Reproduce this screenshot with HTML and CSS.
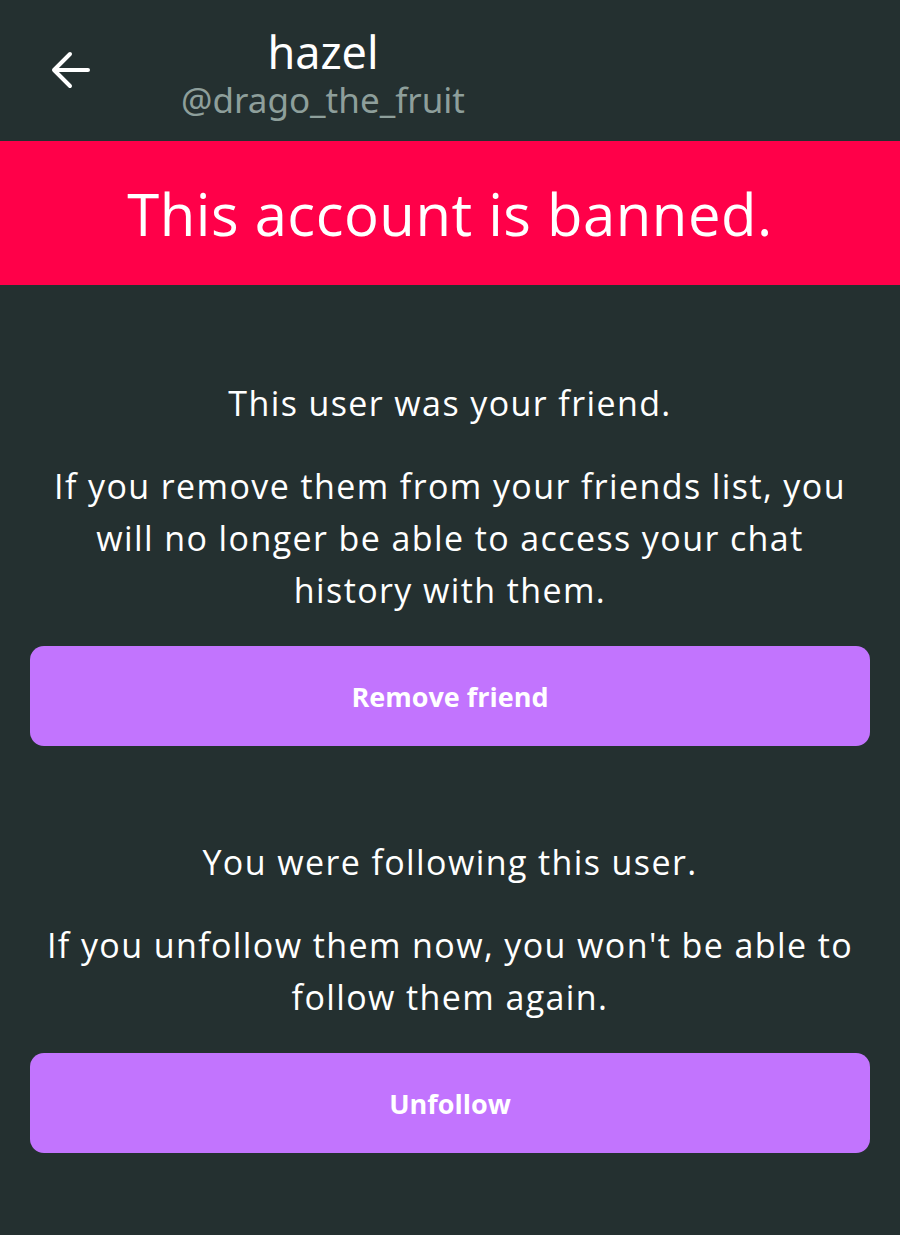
FILE: index.html
```html
<!DOCTYPE html>
<html lang="en">
<head>
    <meta charset="UTF-8">
    <meta name="viewport" content="width=device-width, initial-scale=1.0">
    <title>hazel</title>
    <link rel="stylesheet" href="styles.css">
</head>
<body>

<div class="header">
    <button class="back" aria-label="Back">
        <svg width="40" height="40" viewBox="0 0 40 40">
            <path d="M38 20H4M20 4L4 20l16 16" fill="none" stroke="#fff" stroke-width="4" stroke-linecap="round" stroke-linejoin="round"/>
        </svg>
    </button>
    <div class="title">
        <div class="name">hazel</div>
        <div class="handle">@drago_the_fruit</div>
    </div>
</div>

<div class="banned">This account is banned.</div>

<div class="content">
    <div class="section">
        <p class="lead">This user was your friend.</p>
        <p class="note">If you remove them from your friends list, you will no longer be able to access your chat history with them.</p>
        <button class="button">Remove friend</button>
    </div>

    <div class="section">
        <p class="lead">You were following this user.</p>
        <p class="note">If you unfollow them now, you won't be able to follow them again.</p>
        <button class="button">Unfollow</button>
    </div>
</div>

</body>
</html>
```

FILE: styles.css
```css
body {
    margin: 0;
    background-color: #243030;
    color: #fff;
    font-family: "Open Sans", "Noto Sans", sans-serif;
    height: 1235px;
}

.header {
    display: flex;
    align-items: center;
    height: 141px;
    padding-left: 48px;
    box-sizing: border-box;
}

.back {
    background: none;
    border: none;
    padding: 0;
    width: 44px;
    height: 44px;
    display: flex;
    align-items: center;
    justify-content: center;
    margin-top: -2px;
}

.title {
    display: flex;
    flex-direction: column;
    align-items: center;
    margin-left: 89px;
    margin-top: 6px;
}

.name {
    font-family: "Noto Sans", sans-serif;
    font-weight: 400;
    font-size: 45px;
    line-height: 52px;
}

.handle {
    font-family: "Noto Sans", sans-serif;
    font-size: 35px;
    line-height: 44px;
    color: #8e9f9b;
}

.banned {
    background-color: #ff0049;
    height: 144px;
    display: flex;
    align-items: center;
    justify-content: center;
    font-size: 58px;
    letter-spacing: 0.5px;
}

.content {
    padding: 92px 30px 0;
}

.section {
    text-align: center;
    margin-bottom: 90px;
}

.lead {
    font-size: 34px;
    line-height: 52px;
    letter-spacing: 1.4px;
    margin: 0 0 31px;
}

.note {
    font-size: 34px;
    line-height: 52px;
    letter-spacing: 1.4px;
    margin: 0 auto 30px;
    max-width: 820px;
}

.button {
    display: block;
    width: 100%;
    height: 100px;
    border: none;
    border-radius: 14px;
    background-color: #c274fe;
    color: #fff;
    font-family: "Open Sans", sans-serif;
    font-weight: 700;
    font-size: 27px;
}
```
